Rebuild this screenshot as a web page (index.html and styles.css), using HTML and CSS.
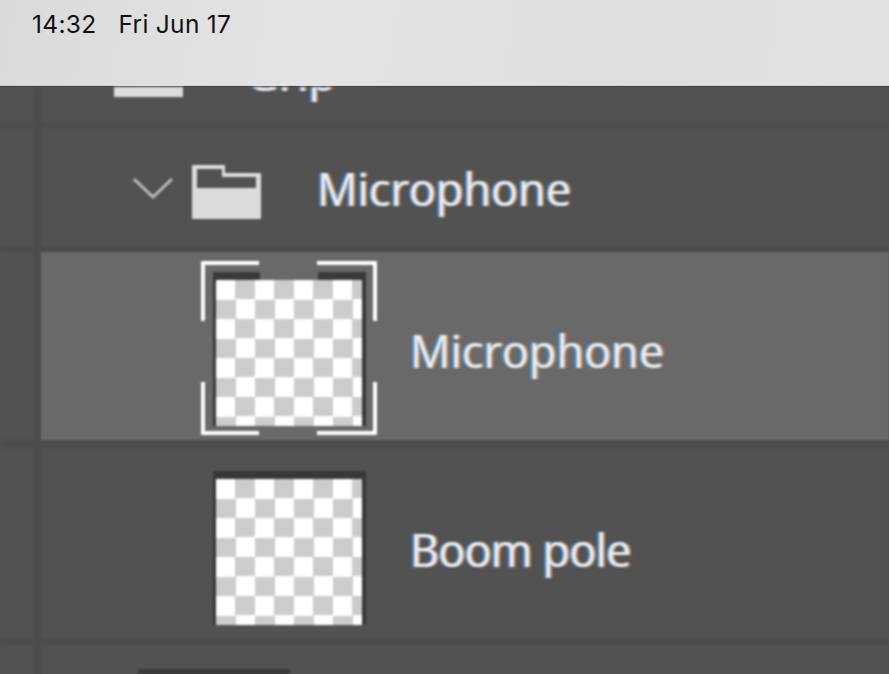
FILE: index.html
```html
<!DOCTYPE html>
<html lang="en">
<head>
    <meta charset="UTF-8">
    <meta name="viewport" content="width=device-width, initial-scale=1.0">
    <title>Layers panel</title>
    <link rel="stylesheet" href="styles.css">
</head>
<body>

    <div class="status-bar">
        <span>14:32</span>
        <span>Fri Jun 17</span>
    </div>

    <div class="panel">
        <!-- row cut off by the status bar -->
        <div class="row row-clipped">
            <div class="gutter"></div>
            <div class="row-body">
                <div class="clipped-thumb"></div>
                <span class="layer-name clipped-name">Grip</span>
            </div>
        </div>

        <div class="row row-group">
            <div class="gutter"></div>
            <div class="row-body">
                <svg class="chevron" width="42" height="24" viewBox="0 0 42 24">
                    <path d="M2 3 L21 21 L40 3" fill="none" stroke="#bdbdbd" stroke-width="3"/>
                </svg>
                <svg class="folder" width="69" height="54" viewBox="0 0 69 54">
                    <path fill-rule="evenodd" fill="#dcdcdc" d="M0 1 Q0 0 1 0 H33 V8 H68 Q69 8 69 9 V53 Q69 54 68 54 H1 Q0 54 0 53 Z M5 4 V23 H64 V12 H30 V4 Z"/>
                </svg>
                <span class="layer-name group-name">Microphone</span>
            </div>
        </div>

        <div class="row row-selected">
            <div class="gutter"></div>
            <div class="row-body">
                <div class="thumb thumb-open">
                    <svg class="frame" width="176" height="174" viewBox="0 0 176 174">
                        <path d="M12 15 H59 M117 15 H165" fill="none" stroke="#3a3a3a" stroke-width="8"/>
                        <path d="M2 60 V2 H58 M116 2 H174 V60 M2 121 V172 H58 M116 172 H174 V121" fill="none" stroke="#ffffff" stroke-width="4"/>
                    </svg>
                </div>
                <span class="layer-name">Microphone</span>
            </div>
        </div>

        <div class="row row-layer">
            <div class="gutter"></div>
            <div class="row-body">
                <div class="thumb"></div>
                <span class="layer-name">Boom pole</span>
            </div>
        </div>

        <div class="row row-last">
            <div class="gutter"></div>
            <div class="row-body">
                <div class="next-thumb"></div>
            </div>
        </div>
    </div>

</body>
</html>
```

FILE: styles.css
```css
* {
    margin: 0;
    padding: 0;
    box-sizing: border-box;
}

html,
body {
    height: 100%;
    overflow: hidden;
}

body {
    display: flex;
    flex-direction: column;
    background-color: #525252;
}

.status-bar {
    height: 87px;
    flex-shrink: 0;
    display: flex;
    gap: 22px;
    padding: 10px 0 0 32px;
    font-family: Inter, sans-serif;
    font-size: 24.5px;
    letter-spacing: 0.3px;
    line-height: 28px;
    color: #111;
    background: linear-gradient(100deg, #dadada 0%, #e4e4e4 35%, #dedede 70%, #e2e2e2 100%);
    border-bottom: 1px solid #3c3c3c;
}

.panel {
    flex: 1;
    overflow: hidden;
    filter: blur(1px);
}

.row {
    display: flex;
    border-bottom: 5px solid #4c4c4c;
    background-color: #525252;
}

.gutter {
    width: 41px;
    flex-shrink: 0;
    background-color: #525252;
    border-right: 8px solid #4c4c4c;
}

.row-body {
    flex: 1;
    display: flex;
    align-items: center;
}

.row-clipped {
    height: 41px;
}

.row-clipped .row-body {
    align-items: flex-start;
    overflow: hidden;
}

.clipped-thumb {
    width: 69px;
    height: 10px;
    margin-left: 73px;
    background-color: #dcdcdc;
}

.row-group {
    height: 124px;
}

.chevron {
    margin-left: 91px;
    margin-top: 1px;
}

.folder {
    margin-left: 18px;
    margin-top: 8px;
}

.row-selected {
    height: 196px;
    border-bottom-width: 8px;
}

.row-selected .row-body {
    background-color: #696969;
}

.row-layer {
    height: 197px;
    border-bottom-width: 6px;
}

.row-last {
    height: 60px;
    border-bottom: 0;
}

.layer-name {
    margin: 10px 0 0 44px;
    font-family: "Open Sans", sans-serif;
    font-size: 45px;
    font-weight: 500;
    line-height: 60px;
    color: #eceef0;
    white-space: nowrap;
    text-shadow: -2px 0 rgba(70, 155, 240, 0.85), 2px 0 rgba(245, 165, 100, 0.75);
}

.row-layer .layer-name {
    margin-top: 13px;
    letter-spacing: -0.8px;
}

.group-name {
    margin: 3px 0 0 56px;
}

.clipped-name {
    margin: -43px 0 0 63px;
}

.thumb {
    position: relative;
    width: 153px;
    height: 154px;
    margin-left: 172px;
    margin-top: 9px;
    flex-shrink: 0;
    border: solid #383838;
    border-width: 8px 4px 0 3px;
    background: conic-gradient(#cccccc 25%, #ffffff 0 50%, #cccccc 0 75%, #ffffff 0) 0 0 / 39px 39px;
}

.thumb-open {
    margin-top: 6px;
    border-top-color: transparent;
    background-clip: padding-box;
    background-origin: padding-box;
}

.frame {
    position: absolute;
    left: -15px;
    top: -19px;
}

.next-thumb {
    width: 152px;
    height: 8px;
    margin: 24px 0 0 97px;
    background-color: #383838;
    align-self: flex-start;
}
```
